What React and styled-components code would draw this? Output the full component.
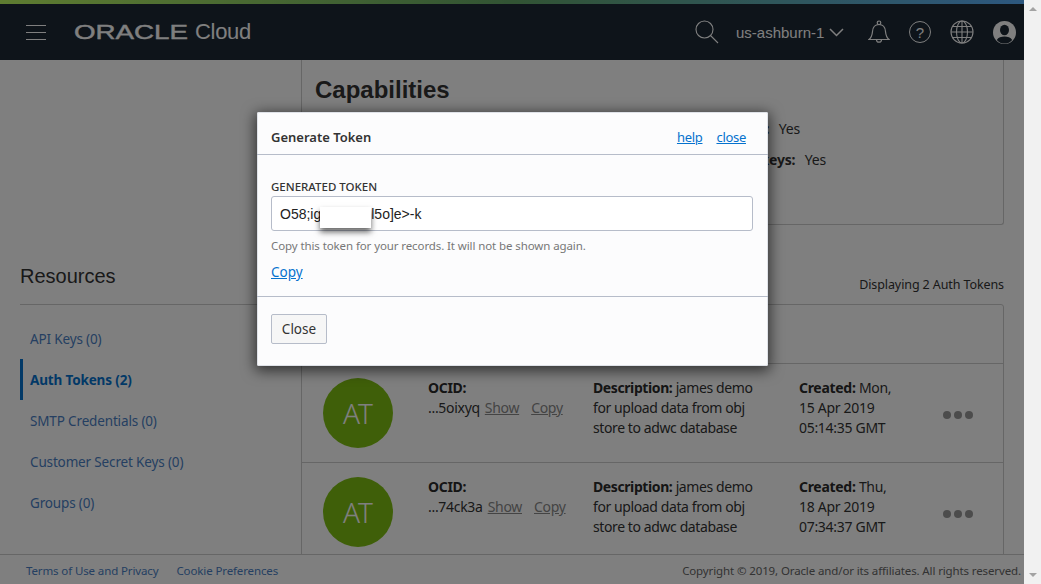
import React from "react";
import styled, { createGlobalStyle } from "styled-components";

const UI_FONT = `"Noto Sans", "Open Sans", sans-serif`;
const HEAD_FONT = `"Liberation Sans", Arial, sans-serif`;

const tokens = [
  { id: "...5oixyq", day: "Mon,", date: "15 Apr 2019", time: "05:14:35 GMT" },
  { id: "...74ck3a", day: "Thu,", date: "18 Apr 2019", time: "07:34:37 GMT" },
];

const resources = [
  { label: "API Keys (0)" },
  { label: "Auth Tokens (2)", active: true },
  { label: "SMTP Credentials (0)" },
  { label: "Customer Secret Keys (0)" },
  { label: "Groups (0)" },
];

const Bell = () => (
  <svg width="22" height="24" viewBox="0 0 22 24" fill="none" stroke="currentColor" strokeWidth="1.2">
    <path d="M1 19.5h20c-2.5-2-3.2-4.5-3.5-8-.3-4-2.5-7-6.5-7s-6.2 3-6.5 7c-.3 3.5-1 6-3.5 8z" />
    <circle cx="11" cy="2.8" r="1.8" />
    <path d="M8.5 19.7a2.5 2.5 0 0 0 5 0" />
  </svg>
);

const Globe = () => (
  <svg width="24" height="24" viewBox="0 0 24 24" fill="none" stroke="currentColor" strokeWidth="1.1">
    <circle cx="12" cy="12" r="11" />
    <ellipse cx="12" cy="12" rx="5.5" ry="11" />
    <path d="M12 1v22M1 12h22M2.5 6.5h19M2.5 17.5h19" />
  </svg>
);

const Account = () => (
  <svg width="23" height="23" viewBox="0 0 23 23">
    <circle cx="11.5" cy="11.5" r="11.5" fill="currentColor" />
    <ellipse cx="11.5" cy="9" rx="4.5" ry="5.3" fill="#1c2834" />
    <path d="M3.8 19c1.5-2.8 4.5-3.5 7.7-3.5s6.2.7 7.7 3.5a10 10 0 0 1-15.4 0z" fill="#1c2834" />
  </svg>
);

const App = () => (
  <>
    <GlobalStyle />
    <Window>
      <Page>
        <ColorStrip />
        <Header>
          <Burger>
            <span />
            <span />
            <span />
          </Burger>
          <Logo>
            <Wordmark>ORACLE</Wordmark>
            <Product>Cloud</Product>
          </Logo>
          <HeaderTools>
            <IconSlot $width={41}>
              <svg width="24" height="24" viewBox="0 0 24 24" fill="none" stroke="currentColor" strokeWidth="1.1">
                <circle cx="9.5" cy="9.5" r="8.5" />
                <path d="M15.5 15.5L23 23" />
              </svg>
            </IconSlot>
            <Region>us-ashburn-1</Region>
            <IconSlot $width={39}>
              <svg width="15" height="9" viewBox="0 0 15 9" fill="none" stroke="currentColor" strokeWidth="1.5">
                <path d="M1 1l6.5 6.5L14 1" />
              </svg>
            </IconSlot>
            <IconSlot $width={41}>
              <Bell />
            </IconSlot>
            <HelpCircle>?</HelpCircle>
            <IconSlot $width={24} $left={19}>
              <Globe />
            </IconSlot>
            <IconSlot $width={23} $left={19}>
              <Account />
            </IconSlot>
          </HeaderTools>
        </Header>

        <Body>
          <Sidebar>
            <ResourcesTitle>Resources</ResourcesTitle>
            <ResourceList>
              {resources.map((item) => (
                <ResourceItem key={item.label} $active={item.active}>
                  {item.label}
                </ResourceItem>
              ))}
            </ResourceList>
          </Sidebar>

          <Main>
            <CapabilitiesPanel>
              <PanelTitle>Capabilities</PanelTitle>
              <CapabilityRow $width={485}>
                <strong>Can use SMTP credentials:</strong> <span>Yes</span>
              </CapabilityRow>
              <CapabilityRow $width={511}>
                <strong>Can use customer secret keys:</strong> <span>Yes</span>
              </CapabilityRow>
            </CapabilitiesPanel>

            <TableCaption>Displaying 2 Auth Tokens</TableCaption>
            <TokenTable>
              <TableHead />
              {tokens.map((token) => (
                <TokenRow key={token.id}>
                  <Avatar>AT</Avatar>
                  <Cell>
                    <strong>OCID:</strong>
                    <br />
                    {token.id}
                    <RowLink $first>Show</RowLink>
                    <RowLink>Copy</RowLink>
                  </Cell>
                  <DescriptionCell>
                    <strong>Description:</strong> james demo for upload data from obj store to adwc database
                  </DescriptionCell>
                  <Cell>
                    <strong>Created:</strong> {token.day}
                    <br />
                    {token.date}
                    <br />
                    {token.time}
                  </Cell>
                  <Dots>
                    <i />
                    <i />
                    <i />
                  </Dots>
                </TokenRow>
              ))}
            </TokenTable>
          </Main>
        </Body>

        <Footer>
          <FooterLinks>
            <span>Terms of Use and Privacy</span>
            <span>Cookie Preferences</span>
          </FooterLinks>
          <span>Copyright © 2019, Oracle and/or its affiliates. All rights reserved.</span>
        </Footer>

        <Overlay />

        <Modal>
          <ModalHeader>
            <ModalTitle>Generate Token</ModalTitle>
            <ModalLinks>
              <ModalLink>help</ModalLink>
              <ModalLink>close</ModalLink>
            </ModalLinks>
          </ModalHeader>
          <ModalBody>
            <FieldLabel>GENERATED TOKEN</FieldLabel>
            <TokenField>
              O58;ig<TokenGap />l5o]e&gt;-k
              <Redaction />
            </TokenField>
            <Hint>Copy this token for your records. It will not be shown again.</Hint>
            <CopyLink>Copy</CopyLink>
          </ModalBody>
          <ModalFooter>
            <CloseButton>Close</CloseButton>
          </ModalFooter>
        </Modal>
      </Page>

      <Scrollbar>
        <Arrow $up />
        <Arrow />
      </Scrollbar>
    </Window>
  </>
);

const GlobalStyle = createGlobalStyle`
  html, body {
    margin: 0;
    height: 100%;
    overflow: hidden;
    background: #fff;
  }
  body {
    font-family: ${UI_FONT};
    font-size: 14px;
    color: #333;
  }
  * {
    box-sizing: border-box;
  }
`;

const Window = styled.div`
  display: flex;
  width: 1041px;
  height: 584px;
`;

const Page = styled.div`
  position: relative;
  width: 1024px;
  height: 584px;
  display: flex;
  flex-direction: column;
  overflow: hidden;
  background: #fff;
`;

const ColorStrip = styled.div`
  height: 4px;
  background: linear-gradient(90deg, #bdf962 0%, #64a868 50%, #5ab0ff 100%);
`;

const Header = styled.header`
  height: 56px;
  display: flex;
  align-items: center;
  padding-left: 26px;
  background: #1c2834;
  color: #fff;
`;

const Burger = styled.div`
  width: 20px;
  height: 15px;
  margin-top: 1px;
  margin-right: 28px;
  display: flex;
  flex-direction: column;
  justify-content: space-between;

  span {
    height: 1px;
    background: #fff;
  }
`;

const Logo = styled.div`
  display: flex;
  align-items: center;
  height: 30px;
`;

const Wordmark = styled.span`
  display: inline-block;
  width: 114px;
  font-family: ${HEAD_FONT};
  font-size: 21px;
  font-weight: 400;
  line-height: 30px;
  -webkit-text-stroke: 0.4px #fff;
  transform: scaleX(1.32);
  transform-origin: left center;
`;

const Product = styled.span`
  margin-left: 7px;
  font-family: ${HEAD_FONT};
  font-size: 22px;
  line-height: 30px;
  letter-spacing: -0.3px;
`;

const HeaderTools = styled.div`
  margin-left: auto;
  padding-right: 8px;
  display: flex;
  align-items: center;
  height: 100%;
`;

const IconSlot = styled.div`
  width: ${(p) => p.$width}px;
  margin-left: ${(p) => p.$left || 0}px;
  display: flex;
  align-items: center;
`;

const Region = styled.span`
  width: 93px;
  white-space: nowrap;
  font-family: ${HEAD_FONT};
  font-size: 15px;
`;

const HelpCircle = styled.div`
  width: 22px;
  height: 22px;
  border: 1.2px solid #fff;
  border-radius: 50%;
  display: flex;
  align-items: center;
  justify-content: center;
  font-family: ${HEAD_FONT};
  font-size: 15px;
`;

const Body = styled.div`
  flex: 1;
  min-height: 0;
  display: flex;
  overflow: hidden;
`;

const Sidebar = styled.aside`
  width: 281px;
  margin-left: 20px;
  padding-top: 204px;
  flex: none;
`;

const ResourcesTitle = styled.h2`
  margin: 0;
  height: 41px;
  padding-bottom: 12px;
  border-bottom: 1px solid #ccc;
  font-family: ${HEAD_FONT};
  font-size: 20px;
  font-weight: 400;
  line-height: 24px;
  color: #333;
`;

const ResourceList = styled.nav`
  padding-top: 13px;
`;

const ResourceItem = styled.div`
  height: 41px;
  display: flex;
  align-items: center;
  padding-left: 7px;
  border-left: 3px solid ${(p) => (p.$active ? "#0572ce" : "transparent")};
  color: ${(p) => (p.$active ? "#0572ce" : "#4a7fc4")};
  font-weight: ${(p) => (p.$active ? 700 : 400)};
  font-size: 13.5px;
  letter-spacing: -0.15px;
`;

const Main = styled.main`
  width: 703px;
  flex: none;
`;

const CapabilitiesPanel = styled.section`
  height: 165px;
  padding: 16px 13px;
  border: 1px solid #ccc;
  border-top: none;
  border-radius: 0 0 3px 3px;
`;

const PanelTitle = styled.h2`
  margin: 0 0 9px;
  font-family: ${HEAD_FONT};
  font-size: 24px;
  font-weight: 700;
  line-height: 28px;
  color: #333;
`;

const CapabilityRow = styled.div`
  width: ${(p) => p.$width}px;
  height: 31px;
  line-height: 31px;
  text-align: right;
  white-space: nowrap;
  letter-spacing: -0.2px;

  strong {
    font-weight: 700;
  }
  span {
    margin-left: 6px;
  }
`;

const TableCaption = styled.div`
  height: 79px;
  padding-top: 50px;
  text-align: right;
  font-size: 12.5px;
  letter-spacing: -0.1px;
  line-height: 20px;
`;

const TokenTable = styled.div`
  border: 1px solid #ccc;
  border-radius: 3px 3px 0 0;
  height: 251px;
  overflow: hidden;
`;

const TableHead = styled.div`
  height: 59px;
  border-bottom: 1px solid #ccc;
`;

const TokenRow = styled.div`
  display: grid;
  grid-template-columns: 105px 165px 206px 144px 1fr;
  height: 99px;
  padding: 14px 0 0 21px;
  border-bottom: 1px solid #ccc;
`;

const Avatar = styled.div`
  width: 70px;
  height: 70px;
  border-radius: 50%;
  background: #7ebf12;
  color: #fff;
  display: flex;
  align-items: center;
  justify-content: center;
  font-family: ${UI_FONT};
  font-size: 28px;
  font-weight: 300;
`;

const Cell = styled.div`
  font-size: 14px;
  line-height: 20px;
  letter-spacing: -0.3px;
  padding-right: 6px;

  strong {
    font-weight: 700;
    color: #2b2b2b;
  }
`;

const DescriptionCell = styled(Cell)`
  padding-right: 40px;
  letter-spacing: -0.4px;
`;

const RowLink = styled.span`
  margin-left: ${(p) => (p.$first ? 5 : 12)}px;
  color: #888;
  text-decoration: underline;
`;

const Dots = styled.div`
  display: flex;
  gap: 3px;
  padding-top: 33px;

  i {
    width: 8px;
    height: 8px;
    border-radius: 50%;
    background: #999;
  }
`;

const Footer = styled.footer`
  height: 30px;
  flex: none;
  display: flex;
  align-items: center;
  justify-content: space-between;
  padding: 2px 3px 0 26px;
  border-top: 1px solid #ccc;
  font-size: 11.5px;
  letter-spacing: -0.12px;
  color: #666;
`;

const FooterLinks = styled.div`
  display: flex;
  gap: 18px;
  color: #4a7fc4;
`;

const Overlay = styled.div`
  position: absolute;
  inset: 0;
  background: rgba(0, 0, 0, 0.5);
`;

const Modal = styled.div`
  position: absolute;
  left: 257px;
  top: 112px;
  width: 511px;
  height: 254px;
  background: #fcfcfd;
  border-radius: 2px;
  box-shadow: 0 3px 14px 2px rgba(0, 0, 0, 0.6), inset 0 0 0 1px #dfe2e8;
`;

const ModalHeader = styled.div`
  height: 43px;
  display: flex;
  align-items: center;
  justify-content: space-between;
  padding: 7px 22px 0 14px;
  border-bottom: 1px solid #b6bcc9;
`;

const ModalTitle = styled.div`
  font-size: 13px;
  font-weight: 600;
  color: #333;
`;

const ModalLinks = styled.div`
  display: flex;
  gap: 14px;
`;

const ModalLink = styled.a`
  font-size: 13px;
  letter-spacing: -0.3px;
  color: #0572ce;
  text-decoration: underline;
`;

const ModalBody = styled.div`
  height: 142px;
  padding: 23px 14px 0;
  border-bottom: 1px solid #b6bcc9;
`;

const FieldLabel = styled.div`
  font-size: 11.5px;
  font-weight: 500;
  line-height: 18px;
  color: #333;
`;

const TokenField = styled.div`
  position: relative;
  width: 482px;
  height: 35px;
  padding-left: 8px;
  display: flex;
  align-items: center;
  white-space: pre;
  background: #fff;
  border: 1px solid #b6bcc9;
  border-radius: 3px;
  font-family: ${HEAD_FONT};
  font-size: 14px;
  color: #222;
`;

const TokenGap = styled.span`
  width: 50px;
  flex: none;
`;

const Redaction = styled.div`
  position: absolute;
  left: 48px;
  top: 10px;
  width: 51px;
  height: 21px;
  background: #fff;
  box-shadow: 0 4px 6px rgba(0, 0, 0, 0.6);
`;

const Hint = styled.div`
  margin-top: 7px;
  font-size: 11.5px;
  letter-spacing: -0.1px;
  line-height: 16px;
  color: #777;
`;

const CopyLink = styled.a`
  display: inline-block;
  margin-top: 8px;
  font-size: 13.5px;
  line-height: 20px;
  color: #0572ce;
  text-decoration: underline;
`;

const ModalFooter = styled.div`
  padding: 17px 14px 0;
`;

const CloseButton = styled.button`
  width: 56px;
  height: 30px;
  padding: 0;
  background: #f6f6f6;
  border: 1px solid #b6bcc9;
  border-radius: 2px;
  font-family: ${UI_FONT};
  font-size: 13.5px;
  color: #333;
`;

const Scrollbar = styled.div`
  width: 17px;
  height: 584px;
  flex: none;
  background: #f1f1f1;
  display: flex;
  flex-direction: column;
  justify-content: space-between;
  align-items: center;
  padding: 7px 0;
`;

const Arrow = styled.div`
  width: 0;
  height: 0;
  border-left: 4px solid transparent;
  border-right: 4px solid transparent;
  ${(p) => (p.$up ? "border-bottom: 4px solid #a3a3a3;" : "border-top: 4px solid #a3a3a3;")}
`;

export default App;
